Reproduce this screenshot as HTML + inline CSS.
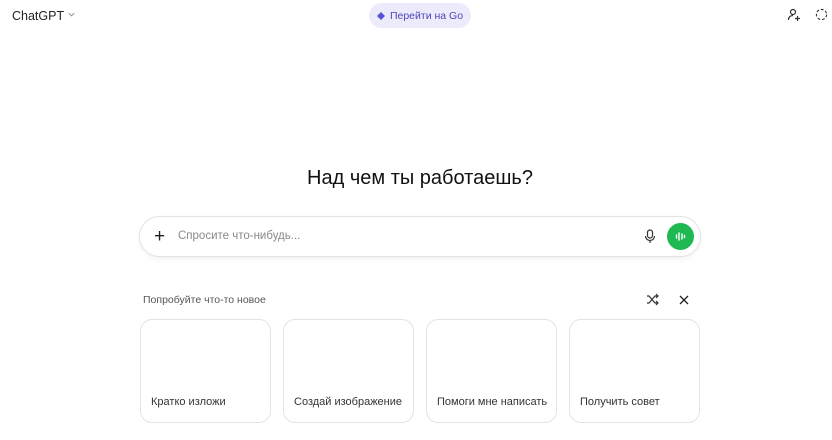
<!DOCTYPE html>
<html><head><meta charset="utf-8"><style>
*{box-sizing:border-box;margin:0;padding:0}
body{width:832px;height:440px;background:#fff;font-family:"Liberation Sans",sans-serif;color:#0d0d0d;position:relative;overflow:hidden}
.abs{position:absolute}
.card{position:absolute;top:319px;width:131px;height:104px;border:1px solid #e3e3e3;border-radius:12px;font-size:11px;color:#333}
.card span{position:absolute;left:10px;bottom:14px}
</style></head><body>
<div class="abs" style="left:12px;top:9px;font-size:12.5px;color:#222">ChatGPT <svg width="9" height="9" viewBox="0 0 10 10" style="vertical-align:1px"><path d="M2 3.5l3 3 3-3" fill="none" stroke="#888" stroke-width="1"/></svg></div>
<div class="abs" style="left:369px;top:3px;width:102px;height:25px;border-radius:13px;background:#ecebfb;font-size:10.5px;color:#4b45b8;display:flex;align-items:center;justify-content:center;gap:5px">
<svg width="8" height="8" viewBox="0 0 8 8"><path d="M4 0L8 4 4 8 0 4z" fill="#5a52d6"/></svg>Перейти на Go</div>
<svg class="abs" style="left:787px;top:8px" width="14" height="14" viewBox="0 0 14 14" fill="none" stroke="#333" stroke-width="1.2"><circle cx="6" cy="4" r="2.5"/><path d="M1.5 12c0-3 2-4.5 4.5-4.5M10.5 8v5M8 10.5h5"/></svg>
<svg class="abs" style="left:815px;top:8px" width="13" height="13" viewBox="0 0 14 14" fill="none" stroke="#333" stroke-width="1.2" stroke-dasharray="3 2"><circle cx="7" cy="7" r="5.5"/></svg>
<div class="abs" style="left:0;width:840px;top:167px;text-align:center;font-size:20px;color:#111">Над чем ты работаешь?</div>
<div class="abs" style="left:139px;top:216px;width:562px;height:41px;border:1px solid #e3e3e3;border-radius:21px;box-shadow:0 2px 6px rgba(0,0,0,.05)">
<div class="abs" style="left:14px;top:10px;font-size:19px;color:#222;line-height:20px">+</div>
<div class="abs" style="left:38px;top:13px;font-size:11.5px;color:#888">Спросите что-нибудь...</div>
<svg class="abs" style="left:504px;top:12px" width="12" height="15" viewBox="0 0 12 15" fill="none" stroke="#333" stroke-width="1.2"><rect x="3.5" y="1" width="5" height="8" rx="2.5"/><path d="M1.5 7a4.5 4.5 0 009 0M6 11.5V14"/></svg>
<div class="abs" style="left:527px;top:6px;width:27px;height:27px;border-radius:50%;background:#1fb954">
<svg width="27" height="27" viewBox="0 0 27 27" stroke="#fff" stroke-width="1.4" stroke-linecap="round"><path d="M9.5 12v3M12 10v7M15 11v5M17.5 12.5v2"/></svg></div>
</div>
<div class="abs" style="left:143px;top:294px;font-size:10.5px;color:#555">Попробуйте что-то новое</div>
<svg class="abs" style="left:646px;top:293px" width="13" height="13" viewBox="0 0 13 13" fill="none" stroke="#333" stroke-width="1.2"><path d="M1 3h2l6 7h3M1 10h2l6-7h3M10 1l2 2-2 2M10 8l2 2-2 2"/></svg>
<svg class="abs" style="left:679px;top:295px" width="10" height="10" viewBox="0 0 10 10" stroke="#222" stroke-width="1.3"><path d="M1 1l8 8M9 1L1 9"/></svg>
<div class="card" style="left:140px"><span>Кратко изложи</span></div>
<div class="card" style="left:283px"><span>Создай изображение</span></div>
<div class="card" style="left:426px"><span>Помоги мне написать</span></div>
<div class="card" style="left:569px"><span>Получить совет</span></div>
</body></html>
